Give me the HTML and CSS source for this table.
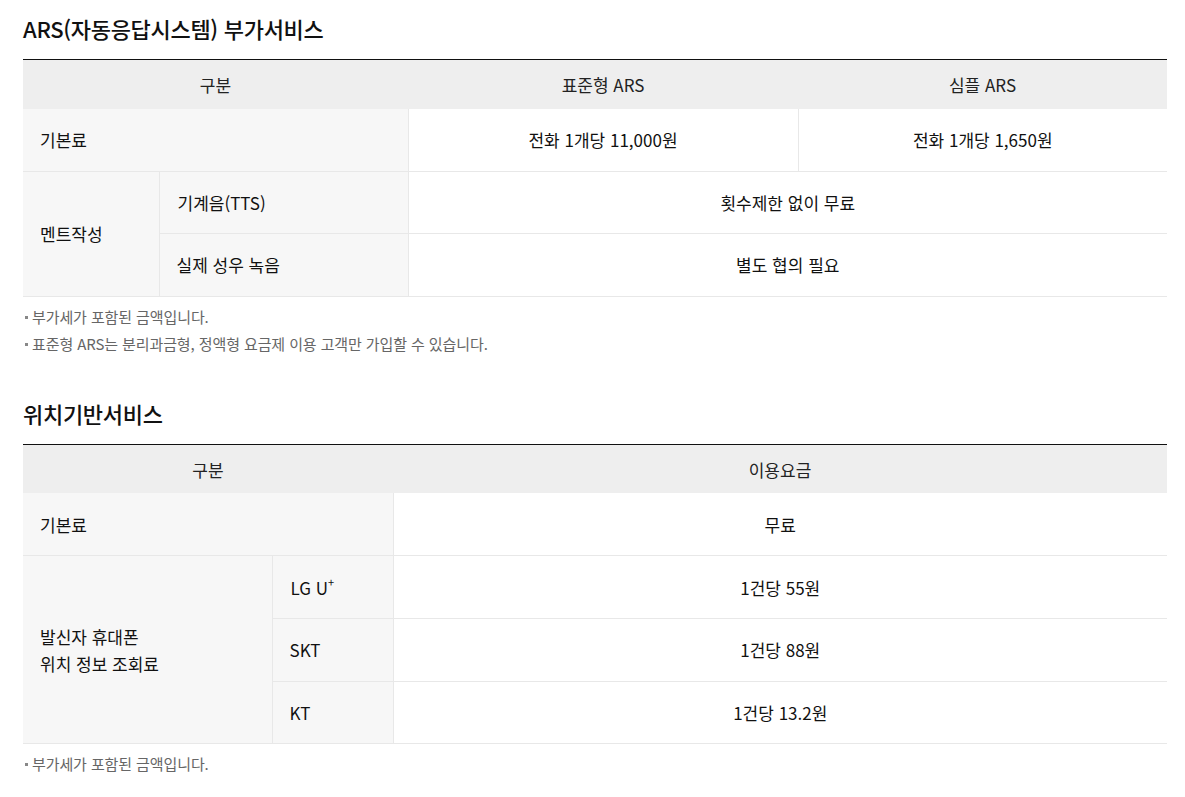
FILE: index.html
```html
<!DOCTYPE html>
<html lang="ko">
<head>
<meta charset="utf-8">
<link rel="stylesheet" href="styles.css">
</head>
<body>
<div class="page">
  <section class="sec">
    <h2 class="title">ARS(자동응답시스템) 부가서비스</h2>
    <table class="tbl t1">
      <colgroup><col class="c1"><col class="c2"><col class="c3"><col class="c4"></colgroup>
      <thead>
        <tr><th colspan="2">구분</th><th>표준형 ARS</th><th>심플 ARS</th></tr>
      </thead>
      <tbody>
        <tr><td colspan="2" class="lbl">기본료</td><td>전화 1개당 11,000원</td><td>전화 1개당 1,650원</td></tr>
        <tr><td rowspan="2" class="lbl">멘트작성</td><td class="lbl">기계음(TTS)</td><td colspan="2">횟수제한 없이 무료</td></tr>
        <tr><td class="lbl">실제 성우 녹음</td><td colspan="2">별도 협의 필요</td></tr>
      </tbody>
    </table>
    <ul class="notes">
      <li>부가세가 포함된 금액입니다.</li>
      <li>표준형 ARS는 분리과금형, 정액형 요금제 이용 고객만 가입할 수 있습니다.</li>
    </ul>
  </section>
  <section class="sec sec2">
    <h2 class="title">위치기반서비스</h2>
    <table class="tbl t2">
      <colgroup><col class="d1"><col class="d2"><col class="d3"></colgroup>
      <thead>
        <tr><th colspan="2">구분</th><th>이용요금</th></tr>
      </thead>
      <tbody>
        <tr><td colspan="2" class="lbl">기본료</td><td>무료</td></tr>
        <tr><td rowspan="3" class="lbl">발신자 휴대폰<br>위치 정보 조회료</td><td class="lbl">LG U<sup>+</sup></td><td>1건당 55원</td></tr>
        <tr><td class="lbl">SKT</td><td>1건당 88원</td></tr>
        <tr><td class="lbl">KT</td><td>1건당 13.2원</td></tr>
      </tbody>
    </table>
    <ul class="notes">
      <li>부가세가 포함된 금액입니다.</li>
    </ul>
  </section>
</div>
</body>
</html>
```
FILE: styles.css
```css
* { box-sizing: border-box; }
html, body { margin: 0; padding: 0; background: #fff; }
body {
  font-family: "Noto Sans CJK KR", "Noto Sans", sans-serif;
  color: #222;
}
.page { padding: 13px 18px 0 23px; }
.title {
  margin: 0;
  font-size: 22px;
  font-weight: 500;
  line-height: 30px;
  color: #111;
  letter-spacing: -0.3px;
}
.tbl {
  width: 100%;
  border-collapse: collapse;
  border-top: 1px solid #111;
  margin-top: 16px;
  table-layout: fixed;
  font-size: 17px;
}
.t1 .c1 { width: 136px; }
.t1 .c2 { width: 249px; }
.t1 .c3 { width: 390px; }
.t2 .d1 { width: 249px; }
.t2 .d2 { width: 121px; }
.tbl th {
  background: #eeeeee;
  font-weight: 400;
  height: 49px;
  padding: 0;
  text-align: center;
  color: #222;
}
.tbl td {
  height: 62.6px;
  padding: 0 17px;
  text-align: center;
  border: 1px solid #e8e8e8;
  line-height: 27px;
  color: #111;
}
.tbl tr > td:last-child { border-right: none; }
.tbl tr > td:first-child { border-left: none; }
.tbl tbody tr:first-child td { border-top: none; }
.tbl td.lbl {
  background: #f7f7f7;
  text-align: left;
  padding-left: 17px;
}
.tbl td.lbl + td.lbl { padding-left: 18px; }
.tbl sup { font-size: 11px; line-height: 0; vertical-align: 8px; }
.notes {
  list-style: none;
  margin: 6px 0 0;
  padding: 0;
  font-size: 15px;
  color: #666;
  line-height: 27px;
  letter-spacing: -0.1px;
}
.notes li { position: relative; padding-left: 9px; }
.notes li::before {
  content: "";
  position: absolute;
  left: 2px;
  top: 13px;
  width: 3px;
  height: 3px;
  background: #888;
}
.sec2 { margin-top: 41px; }
```
